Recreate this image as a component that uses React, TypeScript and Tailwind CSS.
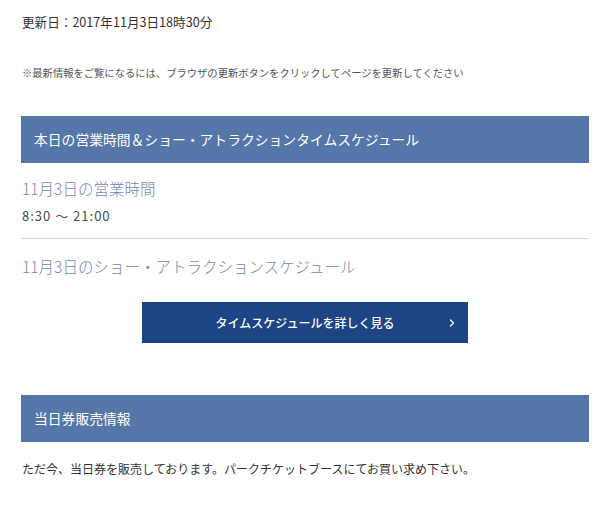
import { ChevronRight } from "lucide-react";

const font = { fontFamily: '"Noto Sans CJK JP", "Noto Sans", sans-serif' };

export default function App() {
  return (
    <div className="min-h-screen bg-white pl-[21px] pr-[11px]" style={font}>
      {/* 更新日 */}
      <p className="pt-[12px] pl-px text-[12.6px] leading-[20px] text-[#333]">
        更新日：2017年11月3日18時30分
      </p>
      <p className="mt-[33px] pl-px text-[10.3px] leading-[16px] text-[#555]">
        ※最新情報をご覧になるには、ブラウザの更新ボタンをクリックしてページを更新してください
      </p>

      {/* 営業時間 */}
      <h2 className="mt-[35px] flex h-[47px] items-center bg-[#5576a8] px-[13px] text-[13.8px] text-white">
        本日の営業時間＆ショー・アトラクションタイムスケジュール
      </h2>
      <h3 className="mt-[13px] pl-px text-[15.5px] font-light leading-[24px] text-[#7189b2]">
        11月3日の営業時間
      </h3>
      <p className="mt-[6px] pl-px text-[13px] leading-[20px] tracking-[1px] text-[#4a4a4a]">
        8:30 〜 21:00
      </p>
      <div className="mt-[12px] border-t border-[#d4d4d4]" />
      <h3 className="mt-[15px] pl-px text-[15.5px] font-light leading-[24px] text-[#7189b2]">
        11月3日のショー・アトラクションスケジュール
      </h3>
      <div className="mt-[24px] flex justify-center">
        <button className="relative flex h-[41px] w-[326px] items-center justify-center bg-[#1d4586] text-[12px] font-medium text-white">
          タイムスケジュールを詳しく見る
          <ChevronRight className="absolute right-[10px] top-1/2 size-[12px] -translate-y-1/2" strokeWidth={2.5} />
        </button>
      </div>

      {/* 当日券 */}
      <h2 className="mt-[52px] flex h-[47px] items-center bg-[#5576a8] px-[13px] text-[13.8px] text-white">
        当日券販売情報
      </h2>
      <p className="mt-[17px] pl-px text-[12px] leading-[20px] text-[#333]">
        ただ今、当日券を販売しております。パークチケットブースにてお買い求め下さい。
      </p>
    </div>
  );
}
